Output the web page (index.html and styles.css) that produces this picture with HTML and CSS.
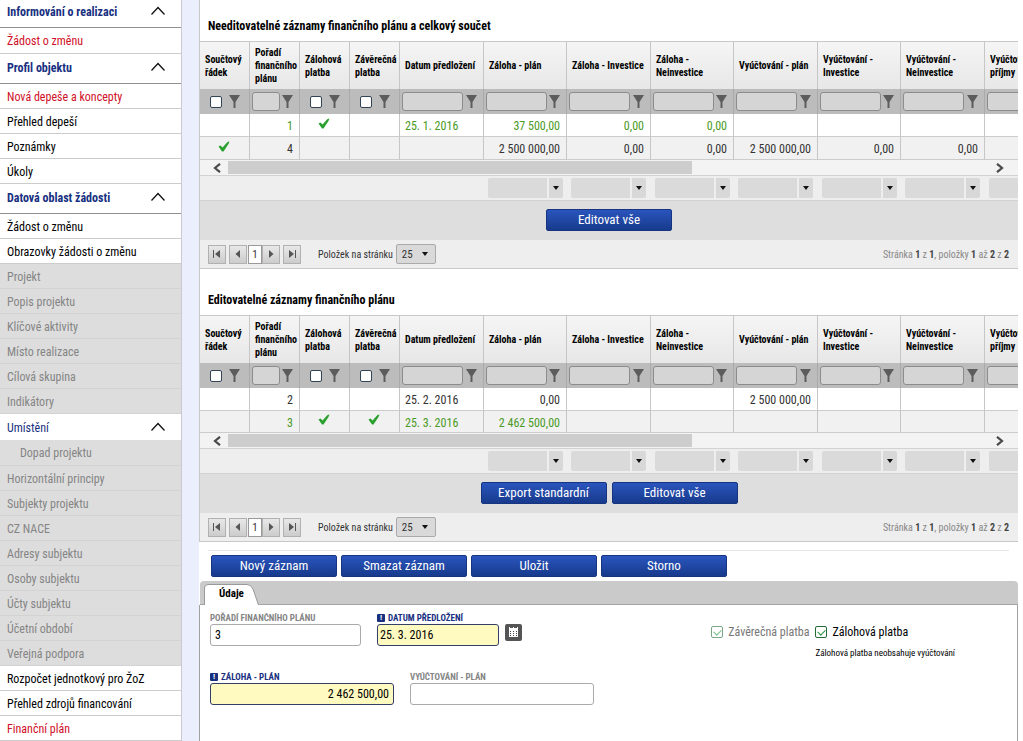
FILE: index.html
```
<!DOCTYPE html>
<html lang="cs">
<head>
<meta charset="utf-8">
<title>Finanční plán</title>
<link rel="stylesheet" href="styles.css">
</head>
<body>
<svg class="defs" aria-hidden="true">
  <symbol id="chev" viewBox="0 0 16 10"><path d="M1.500 8.500 8 1.500 14.500 8.500" fill="none" stroke="#111" stroke-width="1.300"/></symbol>
  <symbol id="funnel" viewBox="0 0 11 13"><path d="M0 0H11L6.500 7V13H4.500V7Z" fill="#5c5c5c"/></symbol>
  <symbol id="tick" viewBox="0 0 12 11"><path d="M0.500 5.500 2.500 4.500 4.500 6.500 9.500 1 11.500 0.500 10.500 3 5.500 10.500H4Z" fill="#2aa12e"/></symbol>
  <symbol id="left" viewBox="0 0 8 10"><path d="M7 .8 2 5 7 9.200" fill="none" stroke="#4a4a4a" stroke-width="2.200"/></symbol>
  <symbol id="right" viewBox="0 0 8 10"><path d="M1 .8 6 5 1 9.200" fill="none" stroke="#4a4a4a" stroke-width="2.200"/></symbol>
  <symbol id="first" viewBox="0 0 8 8"><path d="M0 0H1V8H0ZM7 0V8L2 4Z" fill="#555"/></symbol>
  <symbol id="prev" viewBox="0 0 8 8"><path d="M6 0V8L1.500 4Z" fill="#555"/></symbol>
  <symbol id="next" viewBox="0 0 8 8"><path d="M2 0V8L6.500 4Z" fill="#555"/></symbol>
  <symbol id="last" viewBox="0 0 8 8"><path d="M7 0H8V8H7ZM1 0V8L6 4Z" fill="#555"/></symbol>
</svg>
<div class="page">
<nav class="side">
  <button class="group">Informování o realizaci<svg><use href="#chev"/></svg></button>
  <a class="red" href="#">Žádost o změnu</a>
  <button class="group">Profil objektu<svg><use href="#chev"/></svg></button>
  <a class="red" href="#">Nová depeše a koncepty</a>
  <a href="#">Přehled depeší</a>
  <a href="#">Poznámky</a>
  <a href="#">Úkoly</a>
  <button class="group">Datová oblast žádosti<svg><use href="#chev"/></svg></button>
  <a href="#">Žádost o změnu</a>
  <a href="#">Obrazovky žádosti o změnu</a>
  <a class="off" href="#">Projekt</a>
  <a class="off" href="#">Popis projektu</a>
  <a class="off" href="#">Klíčové aktivity</a>
  <a class="off" href="#">Místo realizace</a>
  <a class="off" href="#">Cílová skupina</a>
  <a class="off" href="#">Indikátory</a>
  <button class="group sub">Umístění<svg><use href="#chev"/></svg></button>
  <a class="off child" href="#">Dopad projektu</a>
  <a class="off" href="#">Horizontální principy</a>
  <a class="off" href="#">Subjekty projektu</a>
  <a class="off" href="#">CZ NACE</a>
  <a class="off" href="#">Adresy subjektu</a>
  <a class="off" href="#">Osoby subjektu</a>
  <a class="off" href="#">Účty subjektu</a>
  <a class="off" href="#">Účetní období</a>
  <a class="off" href="#">Veřejná podpora</a>
  <a href="#">Rozpočet jednotkový pro ŽoZ</a>
  <a href="#">Přehled zdrojů financování</a>
  <a class="red" href="#">Finanční plán</a>
</nav>
<main class="main">
  <section class="block">
    <h2>Needitovatelné záznamy finančního plánu a celkový součet</h2>
    <div class="view">
    <table class="grid">
      <colgroup><col class="n"><col class="n"><col class="n"><col class="n"><col class="w"><col class="m"><col class="w"><col class="m"><col class="w"><col class="m"><col class="w"><col class="w"></colgroup>
      <thead>
        <tr><th>Součtový řádek</th><th>Pořadí finančního plánu</th><th>Zálohová platba</th><th>Závěrečná platba</th><th>Datum předložení</th><th>Záloha - plán</th><th>Záloha - Investice</th><th>Záloha -<br>Neinvestice</th><th>Vyúčtování - plán</th><th>Vyúčtování -<br>Investice</th><th>Vyúčtování -<br>Neinvestice</th><th>Vyúčtování -<br>příjmy</th></tr>
        <tr class="filter">
          <td><div class="f c"><input type="checkbox" aria-label="Součtový řádek"><svg><use href="#funnel"/></svg></div></td>
          <td><div class="f"><input type="text" aria-label="Pořadí"><svg><use href="#funnel"/></svg></div></td>
          <td><div class="f c"><input type="checkbox" aria-label="Zálohová platba"><svg><use href="#funnel"/></svg></div></td>
          <td><div class="f c"><input type="checkbox" aria-label="Závěrečná platba"><svg><use href="#funnel"/></svg></div></td>
          <td><div class="f"><input type="text" aria-label="Datum předložení"><svg><use href="#funnel"/></svg></div></td>
          <td><div class="f"><input type="text" aria-label="Záloha - plán"><svg><use href="#funnel"/></svg></div></td>
          <td><div class="f"><input type="text" aria-label="Záloha - Investice"><svg><use href="#funnel"/></svg></div></td>
          <td><div class="f"><input type="text" aria-label="Záloha - Neinvestice"><svg><use href="#funnel"/></svg></div></td>
          <td><div class="f"><input type="text" aria-label="Vyúčtování - plán"><svg><use href="#funnel"/></svg></div></td>
          <td><div class="f"><input type="text" aria-label="Vyúčtování - Investice"><svg><use href="#funnel"/></svg></div></td>
          <td><div class="f"><input type="text" aria-label="Vyúčtování - Neinvestice"><svg><use href="#funnel"/></svg></div></td>
          <td><div class="f"><input type="text" aria-label="Vyúčtování - příjmy"><svg><use href="#funnel"/></svg></div></td>
        </tr>
      </thead>
      <tbody>
        <tr class="green"><td></td><td>1</td><td class="t"><svg><use href="#tick"/></svg></td><td></td><td class="d">25. 1. 2016</td><td>37 500,00</td><td>0,00</td><td>0,00</td><td></td><td></td><td></td><td></td></tr>
        <tr class="alt"><td class="t"><svg><use href="#tick"/></svg></td><td>4</td><td></td><td></td><td></td><td>2 500 000,00</td><td>0,00</td><td>0,00</td><td>2 500 000,00</td><td>0,00</td><td>0,00</td><td></td></tr>
      </tbody>
    </table>
    </div>
    <div class="scroll"><svg><use href="#left"/></svg><div class="track"><div class="thumb"></div></div><svg><use href="#right"/></svg></div>
    <div class="sums">
      <span><select aria-label="Souhrn 1"></select></span><span><select aria-label="Souhrn 2"></select></span><span><select aria-label="Souhrn 3"></select></span><span><select aria-label="Souhrn 4"></select></span><span><select aria-label="Souhrn 5"></select></span><span><select aria-label="Souhrn 6"></select></span><span><select aria-label="Souhrn 7"></select></span>
    </div>
    <div class="actions"><button class="btn">Editovat vše</button></div>
    <div class="pager">
      <button aria-label="První"><svg><use href="#first"/></svg></button><button class="near" aria-label="Předchozí"><svg><use href="#prev"/></svg></button><a class="cur" href="#">1</a><button class="near" aria-label="Další"><svg><use href="#next"/></svg></button><button aria-label="Poslední"><svg><use href="#last"/></svg></button>
      <label for="size1">Položek na stránku</label><span class="size"><select id="size1"><option>25</option></select></span>
      <p>Stránka <b>1</b> z <b>1</b>, položky <b>1</b> až <b>2</b> z <b>2</b></p>
    </div>
  </section>
  <section class="block second">
    <h2>Editovatelné záznamy finančního plánu</h2>
    <div class="view">
    <table class="grid">
      <colgroup><col class="n"><col class="n"><col class="n"><col class="n"><col class="w"><col class="m"><col class="w"><col class="m"><col class="w"><col class="m"><col class="w"><col class="w"></colgroup>
      <thead>
        <tr><th>Součtový řádek</th><th>Pořadí finančního plánu</th><th>Zálohová platba</th><th>Závěrečná platba</th><th>Datum předložení</th><th>Záloha - plán</th><th>Záloha - Investice</th><th>Záloha -<br>Neinvestice</th><th>Vyúčtování - plán</th><th>Vyúčtování -<br>Investice</th><th>Vyúčtování -<br>Neinvestice</th><th>Vyúčtování -<br>příjmy</th></tr>
        <tr class="filter">
          <td><div class="f c"><input type="checkbox" aria-label="Součtový řádek"><svg><use href="#funnel"/></svg></div></td>
          <td><div class="f"><input type="text" aria-label="Pořadí"><svg><use href="#funnel"/></svg></div></td>
          <td><div class="f c"><input type="checkbox" aria-label="Zálohová platba"><svg><use href="#funnel"/></svg></div></td>
          <td><div class="f c"><input type="checkbox" aria-label="Závěrečná platba"><svg><use href="#funnel"/></svg></div></td>
          <td><div class="f"><input type="text" aria-label="Datum předložení"><svg><use href="#funnel"/></svg></div></td>
          <td><div class="f"><input type="text" aria-label="Záloha - plán"><svg><use href="#funnel"/></svg></div></td>
          <td><div class="f"><input type="text" aria-label="Záloha - Investice"><svg><use href="#funnel"/></svg></div></td>
          <td><div class="f"><input type="text" aria-label="Záloha - Neinvestice"><svg><use href="#funnel"/></svg></div></td>
          <td><div class="f"><input type="text" aria-label="Vyúčtování - plán"><svg><use href="#funnel"/></svg></div></td>
          <td><div class="f"><input type="text" aria-label="Vyúčtování - Investice"><svg><use href="#funnel"/></svg></div></td>
          <td><div class="f"><input type="text" aria-label="Vyúčtování - Neinvestice"><svg><use href="#funnel"/></svg></div></td>
          <td><div class="f"><input type="text" aria-label="Vyúčtování - příjmy"><svg><use href="#funnel"/></svg></div></td>
        </tr>
      </thead>
      <tbody>
        <tr><td></td><td>2</td><td></td><td></td><td class="d">25. 2. 2016</td><td>0,00</td><td></td><td></td><td>2 500 000,00</td><td></td><td></td><td></td></tr>
        <tr class="alt green"><td></td><td>3</td><td class="t"><svg><use href="#tick"/></svg></td><td class="t"><svg><use href="#tick"/></svg></td><td class="d">25. 3. 2016</td><td>2 462 500,00</td><td></td><td></td><td></td><td></td><td></td><td></td></tr>
      </tbody>
    </table>
    </div>
    <div class="scroll"><svg><use href="#left"/></svg><div class="track"><div class="thumb"></div></div><svg><use href="#right"/></svg></div>
    <div class="sums">
      <span><select aria-label="Souhrn 1"></select></span><span><select aria-label="Souhrn 2"></select></span><span><select aria-label="Souhrn 3"></select></span><span><select aria-label="Souhrn 4"></select></span><span><select aria-label="Souhrn 5"></select></span><span><select aria-label="Souhrn 6"></select></span><span><select aria-label="Souhrn 7"></select></span>
    </div>
    <div class="actions"><button class="btn">Export standardní</button><button class="btn">Editovat vše</button></div>
    <div class="pager">
      <button aria-label="První"><svg><use href="#first"/></svg></button><button class="near" aria-label="Předchozí"><svg><use href="#prev"/></svg></button><a class="cur" href="#">1</a><button class="near" aria-label="Další"><svg><use href="#next"/></svg></button><button aria-label="Poslední"><svg><use href="#last"/></svg></button>
      <label for="size2">Položek na stránku</label><span class="size"><select id="size2"><option>25</option></select></span>
      <p>Stránka <b>1</b> z <b>1</b>, položky <b>1</b> až <b>2</b> z <b>2</b></p>
    </div>
  </section>
  <div class="commands"><button class="btn">Nový záznam</button><button class="btn">Smazat záznam</button><button class="btn">Uložit</button><button class="btn">Storno</button></div>
  <div class="tabs">
    <svg class="tabshape" viewBox="0 0 56 21"><path d="M.5 21V4Q.5 .5 4 .5H43Q47 .5 49 5L54.500 21" fill="#fff" stroke="#999"/></svg>
    <button class="tab">Údaje</button>
  </div>
  <form class="panel">
    <div class="row">
      <div class="field order"><label for="order">POŘADÍ FINANČNÍHO PLÁNU</label><input id="order" type="text" value="3"></div>
      <div class="field date"><label class="req" for="date"><i>!</i>DATUM PŘEDLOŽENÍ</label><input id="date" class="must" type="text" value="25. 3. 2016"></div>
      <button class="cal" type="button" aria-label="Kalendář"><svg viewBox="0 0 17 17"><path d="M4 4H13V13H4ZM4 3H5V4H4ZM8 3H9V4H8ZM12 3H13V4H12Z" fill="#fff"/><path d="M5 7H6V8H5ZM8 7H9V8H8ZM11 7H12V8H11ZM5 9H6V10H5ZM8 9H9V10H8ZM11 9H12V10H11ZM5 11H6V12H5ZM8 11H9V12H8ZM11 11H12V12H11Z" fill="#444"/></svg></button>
      <div class="checks">
        <label class="off"><input type="checkbox" checked disabled>Závěrečná platba</label>
        <div><label><input type="checkbox" checked>Zálohová platba</label><small>Zálohová platba neobsahuje vyúčtování</small></div>
      </div>
    </div>
    <div class="row">
      <div class="field plan"><label class="req" for="plan"><i>!</i>ZÁLOHA - PLÁN</label><input id="plan" class="must num" type="text" value="2 462 500,00"></div>
      <div class="field plan"><label for="bill">VYÚČTOVÁNÍ - PLÁN</label><input id="bill" type="text"></div>
    </div>
  </form>
</main>
</div>
</body>
</html>
```
FILE: styles.css
```
* { box-sizing: border-box; }
body { margin: 0; background: #fff; color: #000; overflow: hidden; }
body, button, input, select { font-family: "Roboto Condensed", "Liberation Sans Narrow", Roboto, sans-serif; }
button { cursor: pointer; }
a { text-decoration: none; color: inherit; }
.defs { display: none; }
.page { display: flex; min-height: 100vh; }

/* navigation */
.side { flex: 0 0 182px; margin-top: -2px; border-right: 1px solid #c9c9d2; font-size: 12px; }
.side a { display: block; height: 25px; line-height: 26px; padding-left: 7px; border-bottom: 1px solid #ccc; }
.side .red { color: #d00f27; }
.side .red:first-of-type { height: 26px; }
.side .off { background: #ddd; color: #858585; border-color: #d3d3d3; }
.side .child { height: 26px; padding-left: 20px; }
.group { display: flex; width: 100%; height: 30px; justify-content: space-between; align-items: flex-start; padding: 5px 15px 0 7px; border: 0; border-bottom: 1px solid #909090; background: #fff; color: #17307f; font-size: 12px; font-weight: bold; line-height: 18px; }
.group svg { width: 16px; height: 10px; margin-top: 3px; }
.sub { height: 26px; font-weight: normal; border: 0; }

/* record grids */
.main { flex: 1; min-width: 0; padding-left: 18px; margin-right: 5px; background: linear-gradient(90deg, #ebeffd 17px, #fff 17px); display: flex; flex-direction: column; }
.block { border-left: 1px solid #c8c8c8; margin-left: -1px; }
h2 { margin: 0; height: 41px; padding: 16px 0 0 8px; font-size: 12px; line-height: 20px; }
.second h2 { height: 46px; padding-top: 21px; }
.view { overflow: hidden; border-top: 1px solid #c8c8c8; }
.grid { table-layout: fixed; width: 869px; border-collapse: separate; border-spacing: 0; font-size: 12px; }
.n { width: 50px; }
.w { width: 84px; }
.m { width: 83px; }
.grid th { height: 47px; padding: 0 0 0 5px; text-align: left; font-size: 10px; line-height: 13px; border-right: 1px solid #c6c6c6; background: linear-gradient(#f5f5f5, #e7e7e7); }
.grid td { height: 23px; padding: 2px 6px 0 0; text-align: right; line-height: 16px; color: #333; border-right: 1px solid #c6c6c6; border-bottom: 1px solid #ccc; white-space: nowrap; }
.grid .alt td { background: #f1f1f1; }
.second .alt td { height: 22px; }
.grid .green td { color: #4a9a25; }
.grid .d { text-align: left; padding-left: 5px; }
.grid .t { text-align: center; padding: 0 2px 4px 0; line-height: 0; }
.t svg { width: 12px; height: 11px; }
.grid .filter td { height: 25px; padding: 0; background: #bcbcbc; border-color: #aaa; border-bottom: 0; }
.f { display: flex; align-items: center; justify-content: space-between; padding: 0 6px 0 2px; }
.f svg { flex: none; width: 11px; height: 13px; }
.f.c { padding: 0 9px; }
.f input[type=text] { width: 61px; min-width: 0; height: 19px; padding: 0; border: 1px solid #8c8c8c; border-radius: 3px; background: #d5d5d5; }
td:nth-child(2) .f input { width: 28px; }
input[type=checkbox] { appearance: none; margin: 0; width: 12px; height: 12px; border: 1px solid #345; border-radius: 2px; background: #fff; }
.f.c input { margin-left: 1px; }
.scroll { display: flex; align-items: center; height: 15px; padding: 0 14px 0 13px; background: #f3f3f3; }
.scroll svg { width: 8px; height: 10px; }
.track { flex: 1; height: 13px; margin: 0 7px; }
.thumb { width: 61%; height: 100%; background: #cdcdcd; }
.sums { display: flex; height: 26px; padding: 2px 0 0 288px; background: #eee; border-top: 1px solid #d2d2d2; border-bottom: 1px solid #d2d2d2; overflow: hidden; }
.sums span { position: relative; flex: 0 0 83px; }
.sums span:nth-child(even) { flex-basis: 84px; }
.sums select { display: block; appearance: none; width: 75px; height: 20px; border: 0; border-radius: 2px; background: linear-gradient(90deg, #dadada 59px, #eee 59px, #eee 61px, #d8d8d8 61px); }
.sums span::after, .size::after { content: ""; position: absolute; left: 65px; top: 8px; border: 3px solid transparent; border-top: 4px solid #111; border-bottom: 0; }
.actions { display: flex; justify-content: center; gap: 5px; height: 39px; padding: 8px 0; background: #dedede; }
.btn { width: 126px; height: 22px; padding: 0; border: 1px solid #16347f; border-radius: 2px; background: linear-gradient(#2a55bd, #173a8c); color: #fff; font-size: 13px; line-height: 20px; }
.pager { display: flex; align-items: center; height: 29px; padding: 0 9px 0 8px; background: #eee; border-bottom: 1px solid #c8c8c8; font-size: 10px; color: #333; }
.pager button { width: 18px; height: 19px; padding: 0; border: 1px solid #b1b1b1; background: linear-gradient(#e8e8e8, #ccc); line-height: 0; }
.pager svg { width: 8px; height: 8px; }
.pager .near:nth-child(2) { margin-left: 3px; margin-right: 1px; }
.pager .near:nth-child(4) { margin-right: 3px; }
.cur { width: 14px; height: 19px; border: 1px solid #999; background: #fff; text-align: center; line-height: 17px; font-size: 11px; }
.pager label { margin: 0 3px 0 17px; }
.size { position: relative; }
.size::after { left: 26px; }
.size select { display: block; appearance: none; width: 40px; height: 20px; padding: 0 5px; border: 1px solid #aaa; border-radius: 2px; background: #d9d9d9; color: #333; font-size: 11px; }
.pager p { margin: 0 0 0 auto; color: #888; }
.pager b { color: #444; }

/* record detail */
.commands { display: flex; gap: 4px; margin: 8px 9px 0 8px; padding: 4px 3px; border-top: 1px solid #e7e7ea; }
.tabs { position: relative; height: 24px; background: #cacaca; border-radius: 4px 4px 0 0; border-bottom: 1px solid #a5a5a5; }
.tabshape { position: absolute; left: 4px; bottom: -1px; width: 56px; height: 21px; }
.tab { position: relative; margin: 4px 0 0 19px; padding: 0; border: 0; background: none; font-size: 11px; font-weight: bold; line-height: 18px; }
.panel { flex: 1; padding: 6px 8px 0 10px; border: solid #a0a0a0; border-width: 0 1px; margin-left: -1px; }
.row { display: flex; height: 59px; gap: 16px; }
.field label { display: flex; align-items: center; gap: 3px; height: 13px; font-size: 9px; font-weight: bold; color: #858585; }
.field .req { color: #17307f; }
.req i { width: 8px; height: 8px; border-radius: 1px; background: #17307f; color: #fff; font-size: 8px; line-height: 8px; font-style: normal; text-align: center; }
.field input { display: block; width: 100%; height: 22px; padding: 0 4px; border: 1px solid #aaa; border-radius: 3px; font-size: 12px; }
.field .must { background: #fffac0; border-color: #333f66; }
.order { width: 151px; }
.date { width: 122px; }
.date .must { padding: 0 2px; }
.plan { width: 184px; }
.num { text-align: right; }
.cal { width: 17px; height: 17px; margin: 13px 0 0 -10px; padding: 0; border: 0; border-radius: 2px; background: #555; }
.cal svg { display: block; }
.checks { display: flex; gap: 6px; margin: 13px 54px 0 auto; font-size: 12px; }
.checks label { display: flex; align-items: center; gap: 5px; height: 16px; }
.checks input { position: relative; border-color: #246b35; }
.checks input::after { content: ""; position: absolute; left: 3px; top: 1px; width: 4px; height: 6px; border: solid #22933a; border-width: 0 1px 1px 0; transform: rotate(45deg); }
.checks .off { color: #777; }
.checks .off input { opacity: .6; }
.checks small { display: block; margin-top: 7px; font-size: 9px; line-height: 12px; }
```
